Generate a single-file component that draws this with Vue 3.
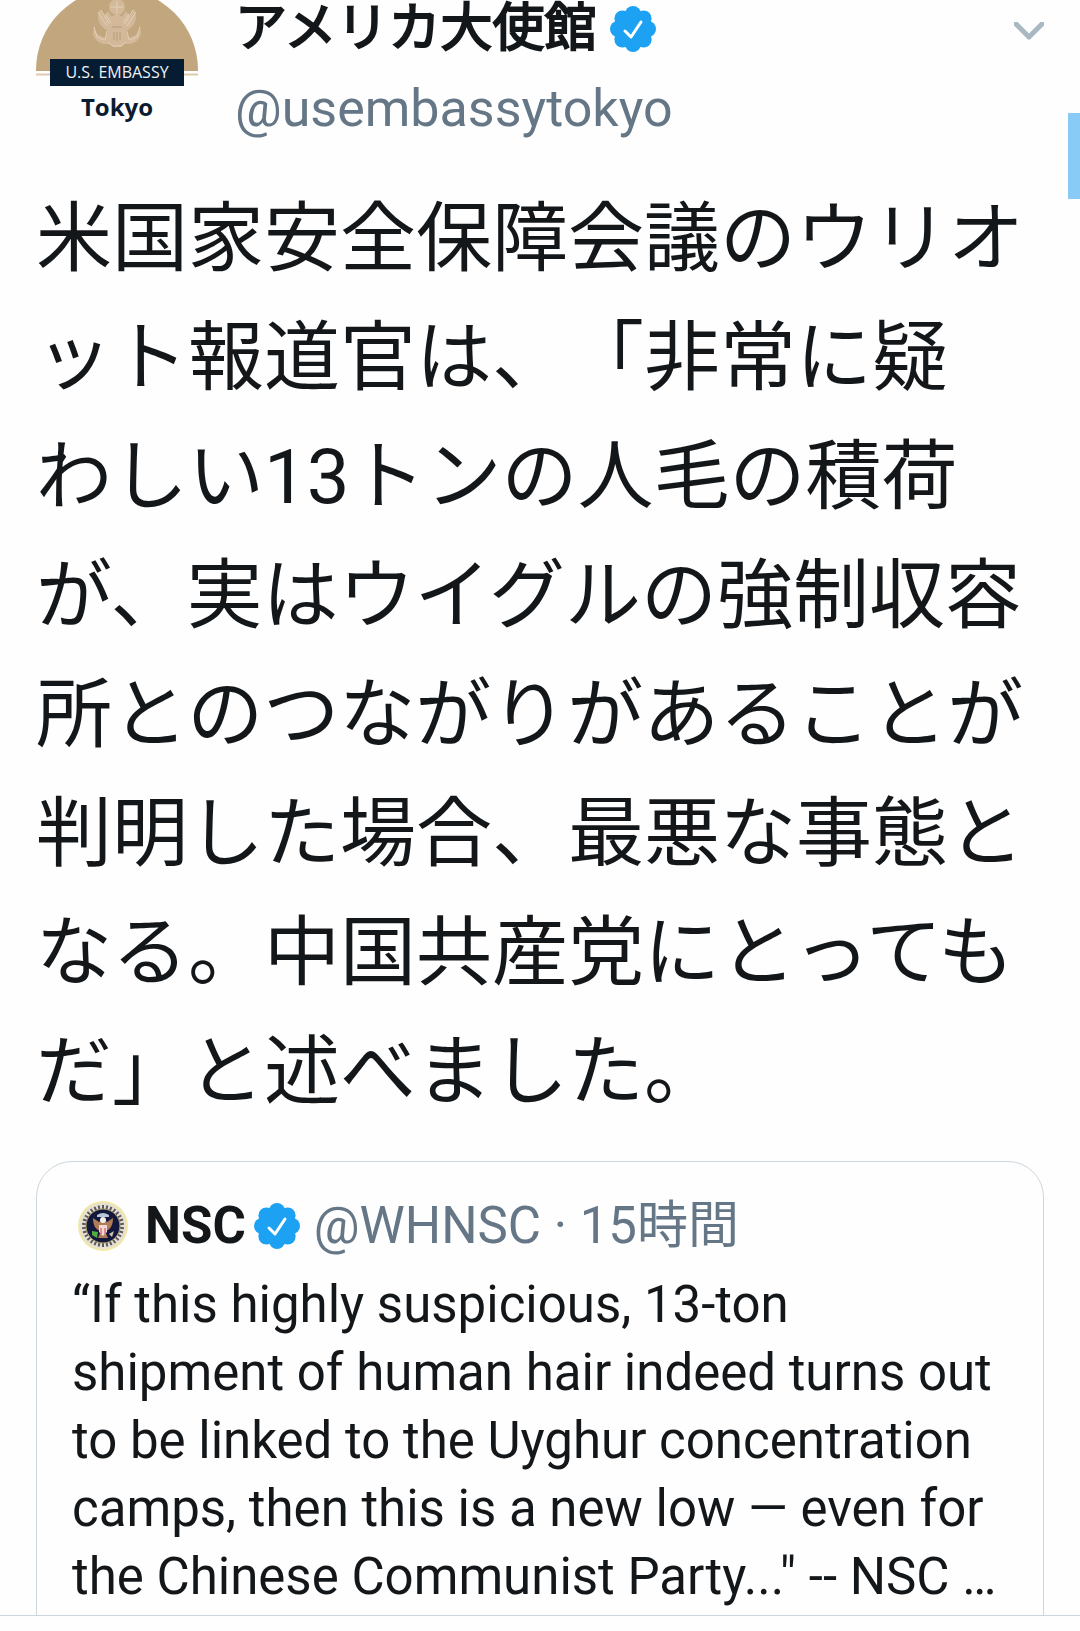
<script setup>
import { ref } from 'vue';

const author = {
  name: 'アメリカ大使館',
  handle: '@usembassytokyo',
};

const bodyLines = [
  '米国家安全保障会議のウリオ',
  'ット報道官は、「非常に疑',
  'わしい13トンの人毛の積荷',
  'が、実はウイグルの強制収容',
  '所とのつながりがあることが',
  '判明した場合、最悪な事態と',
  'なる。中国共産党にとっても',
  'だ」と述べました。',
];

const quote = {
  name: 'NSC',
  meta: '@WHNSC · 15時間',
  lines: [
    '“If this highly suspicious, 13-ton',
    'shipment of human hair indeed turns out',
    'to be linked to the Uyghur concentration',
    'camps, then this is a new low — even for',
    'the Chinese Communist Party..." -- NSC …',
  ],
};

// scallops round the verified badge
const petals = Array.from({ length: 8 }, (_, i) => {
  const a = (i * Math.PI) / 4;
  return { x: 23 + 15 * Math.cos(a), y: 23 + 15 * Math.sin(a) };
});

const ringMarks = Array.from({ length: 30 }, (_, i) => i * 12);

const menuOpen = ref(false);
</script>

<template>
  <main class="page">
    <article class="tweet">
      <header class="tweet-header">
        <svg class="avatar" viewBox="0 11 162 151" role="img" aria-label="U.S. Embassy Tokyo">
          <path d="M0 82V81A81 81 0 0 1 162 81V82Z" fill="#c2a67e" />
          <path d="M0 85.500H162" stroke="#dfc9ae" stroke-width="2" />
          <g fill="#d3b999">
            <circle cx="81" cy="18" r="8" />
            <path d="M64 20c-4 8-2 17 8 22l-3 9 8 7h8l8-7-3-9c10-5 12-14 8-22l-4 8-4-6-4 6-5-4-5 4-4-6-4 6z" />
            <path d="M58 37c1 8 6 11 13 12l2 6c-8 1-14-3-16-10zM104 37c-1 8-6 11-13 12l-2 6c8 1 14-3 16-10z" />
          </g>
          <g fill="none" stroke="#e3d0b8" stroke-width="1">
            <path d="M62 23l9 14M65 21l8 14M69 25l6 9M100 23l-9 14M97 21l-8 14M93 25l-6 9" />
            <path d="M58 38l3 10 7 3M104 38l-3 10-7 3M72 53l5 4h8l5-4M71 42l-2 9M91 42l2 9" />
            <path d="M81 12v12M75 18h12" />
          </g>
          <path d="M76 38h10M78 43v8M81 43v9M84 43v8" stroke="#b99b74" stroke-width="1" />
          <rect x="14" y="70" width="134" height="27" fill="#051c33" />
          <text x="81" y="89" class="avatar-label">U.S. EMBASSY</text>
          <text x="81" y="127" class="avatar-city">Tokyo</text>
        </svg>
        <div class="names">
          <div class="name-row">
            <span class="name">{{ author.name }}</span>
            <svg class="badge" viewBox="0 0 46 46" aria-label="認証済みアカウント">
              <g fill="#1da1f2">
                <circle cx="23" cy="23" r="17" />
                <circle v-for="(p, i) in petals" :key="i" :cx="p.x" :cy="p.y" r="8" />
              </g>
              <path d="M15 25l6 6 10-15" class="badge-check" />
            </svg>
          </div>
          <a class="handle" href="#">{{ author.handle }}</a>
        </div>
        <button class="menu" type="button" aria-label="メニュー" :aria-expanded="menuOpen" @click="menuOpen = !menuOpen">
          <svg viewBox="0 0 30 18">
            <path d="M2 2l13 13L28 2" />
          </svg>
        </button>
      </header>

      <p class="body">
        <span v-for="line in bodyLines" :key="line" class="line">{{ line }}</span>
      </p>

      <section class="quote">
        <div class="quote-header">
          <svg class="seal" viewBox="0 0 56 56" role="img" aria-label="NSC">
            <circle cx="28" cy="28" r="25" fill="#f1e7a9" />
            <circle cx="28" cy="28" r="23" fill="#e6e0d2" />
            <g stroke="#5b5760" stroke-width="2">
              <path v-for="a in ringMarks" :key="a" d="M28 7v4" :transform="`rotate(${a} 28 28)`" />
            </g>
            <circle cx="28" cy="28" r="17" fill="#14173c" stroke="#a99b6a" stroke-width="1" />
            <path d="M18 20c0 8 3 12 8 13l-3 7h10l-3-7c5-1 8-5 8-13l-6 4-4-3-4 3z" fill="#b07c58" />
            <path d="M22 17q6-4 12 0v2H22z" fill="#b9c6da" />
            <path d="M24 27h8v7l-4 4-4-4z" fill="#f0d6d4" />
            <path d="M26 30v6M30 30v6" stroke="#c8475a" stroke-width="1" />
            <path d="M17 33l6 1-1 6-5-3z" fill="#4fae3d" />
            <path d="M34 36l5-3-2 6z" fill="#cfc7b4" />
            <circle cx="28" cy="22" r="3" fill="#f3f1ea" />
          </svg>
          <span class="quote-name">{{ quote.name }}</span>
          <svg class="badge" viewBox="0 0 46 46" aria-label="認証済みアカウント">
            <g fill="#1da1f2">
              <circle cx="23" cy="23" r="17" />
              <circle v-for="(p, i) in petals" :key="i" :cx="p.x" :cy="p.y" r="8" />
            </g>
            <path d="M15 25l6 6 10-15" class="badge-check" />
          </svg>
          <span class="quote-meta">{{ quote.meta }}</span>
        </div>
        <p class="quote-text">
          <span v-for="line in quote.lines" :key="line" class="line">{{ line }}</span>
        </p>
      </section>
    </article>
    <div class="scroll-thumb"></div>
  </main>
</template>

<style>
body {
  background-color: #fefefe;
}
</style>

<style scoped>
.page {
  position: relative;
  font-family: Roboto, "Noto Sans CJK JP", sans-serif;
  color: #14171a;
}

.tweet {
  padding: 0 36px;
  border-bottom: 1px solid #ccd6dd;
  overflow: hidden;
}

.tweet-header {
  display: flex;
  align-items: flex-start;
  height: 180px;
}

.avatar {
  flex: none;
  width: 162px;
  height: 151px;
}

.avatar-label {
  font-family: "Open Sans", sans-serif;
  font-size: 16px;
  fill: #eef2f6;
  text-anchor: middle;
}

.avatar-city {
  font-family: "Open Sans", sans-serif;
  font-size: 24px;
  font-weight: 700;
  fill: #0b1c30;
  text-anchor: middle;
}

.names {
  flex: 1;
  margin-left: 37px;
}

.name-row {
  display: flex;
  align-items: center;
  height: 58px;
}

/* thickened regular weight, lighter than the family's bold */
.name {
  font-size: 52px;
  font-weight: 400;
  line-height: 60px;
  white-space: nowrap;
  -webkit-text-stroke: 2px #14171a;
}

.badge {
  flex: none;
  width: 46px;
  height: 46px;
  margin-left: 14px;
}

.badge-check {
  fill: none;
  stroke: #fff;
  stroke-width: 3;
  stroke-linecap: round;
  stroke-linejoin: round;
}

.handle {
  display: block;
  margin-top: 19px;
  font-size: 52px;
  line-height: 64px;
  color: #657786;
  text-decoration: none;
}

.menu {
  flex: none;
  margin-top: 22px;
  padding: 0;
  border: none;
  background: none;
  cursor: pointer;
}

.menu svg {
  display: block;
  width: 30px;
  height: 18px;
}

.menu path {
  fill: none;
  stroke: #aab8c2;
  stroke-width: 5;
  stroke-linecap: round;
  stroke-linejoin: round;
}

.line {
  display: block;
  white-space: nowrap;
}

.body {
  margin: 0;
  font-size: 76px;
  line-height: 119px;
  text-spacing-trim: space-all;
}

/* the lower edge of the card runs on under the divider */
.quote {
  margin-top: 29px;
  margin-bottom: -40px;
  padding: 36px 35px 43px;
  border: 1px solid #ccd6dd;
  border-radius: 36px;
}

.quote-header {
  display: flex;
  align-items: center;
  height: 56px;
}

.seal {
  flex: none;
  width: 56px;
  height: 56px;
  margin-left: 3px;
}

.quote-name {
  margin-left: 14px;
  font-size: 51px;
  font-weight: 700;
  line-height: 56px;
}

.quote-header .badge {
  margin-left: 8px;
}

.quote-meta {
  margin-left: 14px;
  font-size: 51px;
  line-height: 56px;
  color: #657786;
  white-space: nowrap;
}

.quote-text {
  margin: 17px 0 0;
  font-size: 51px;
  line-height: 68px;
}

.scroll-thumb {
  position: absolute;
  top: 113px;
  right: 0;
  width: 12px;
  height: 86px;
  background-color: #88cbf6;
}
</style>
